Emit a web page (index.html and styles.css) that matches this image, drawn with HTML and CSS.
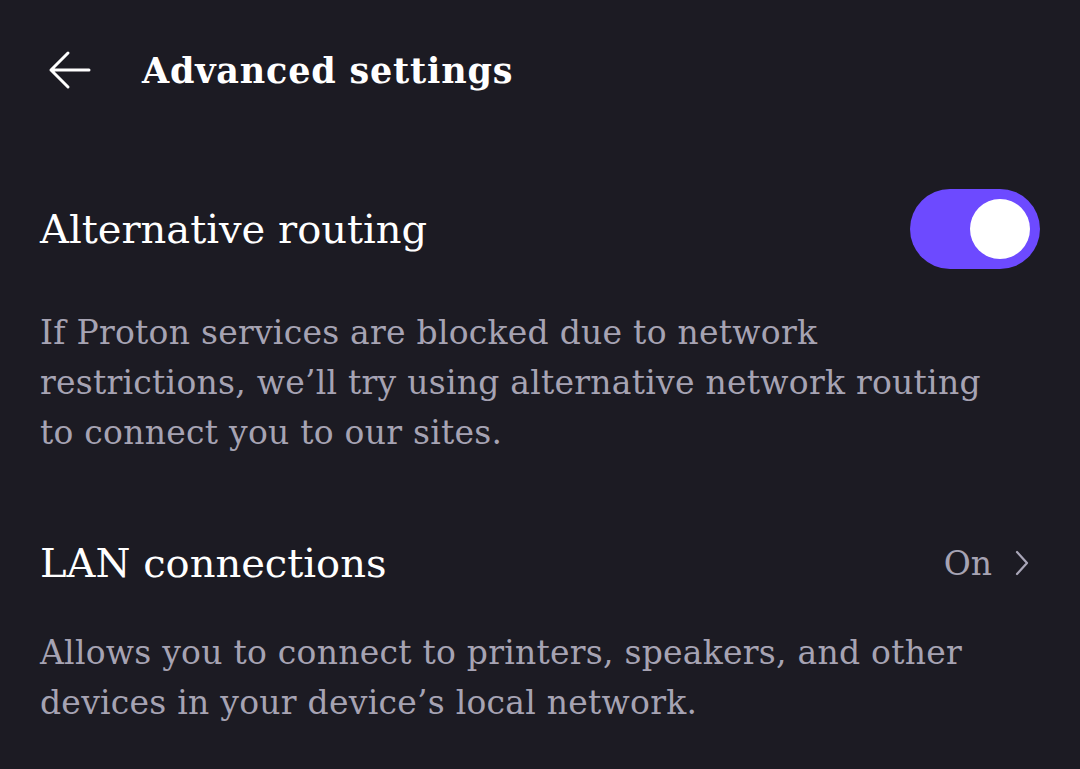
FILE: index.html
```html
<!DOCTYPE html>
<html lang="en">
<head>
    <meta charset="UTF-8">
    <meta name="viewport" content="width=device-width, initial-scale=1.0">
    <title>Advanced settings</title>
    <link rel="stylesheet" href="styles.css">
</head>
<body>
    <!-- 顶部标题栏 -->
    <div class="top-bar">
        <a class="back" href="javascript:;">
            <svg width="44" height="44" viewBox="0 0 44 44">
                <path d="M42 22H4M21 5L4 22l17 17" fill="none" stroke="#fff" stroke-width="3" stroke-linecap="round" stroke-linejoin="round"/>
            </svg>
        </a>
        <h1 class="page-title">Advanced settings</h1>
    </div>

    <!-- 设置项：替代路由 -->
    <div class="setting first">
        <div class="setting-row">
            <span class="setting-name">Alternative routing</span>
            <span class="switch on"><span class="knob"></span></span>
        </div>
        <p class="setting-desc">If Proton services are blocked due to network<br>restrictions, we’ll try using alternative network routing<br>to connect you to our sites.</p>
    </div>

    <!-- 设置项：局域网连接 -->
    <div class="setting second">
        <div class="setting-row">
            <span class="setting-name">LAN connections</span>
            <span class="setting-value">On
                <svg width="16" height="28" viewBox="0 0 16 28">
                    <path d="M3 3l10 11L3 25" fill="none" stroke="#a9a6b8" stroke-width="2.2" stroke-linecap="round" stroke-linejoin="round"/>
                </svg>
            </span>
        </div>
        <p class="setting-desc">Allows you to connect to printers, speakers, and other<br>devices in your device’s local network.</p>
    </div>
</body>
</html>
```

FILE: styles.css
```css
* {
    margin: 0;
    padding: 0;
}

body {
    background-color: #1c1b23;
    color: #fff;
    font-family: "DejaVu Serif", "Liberation Serif", serif;
}

/* 顶部标题栏 */
.top-bar {
    height: 140px;
    display: flex;
    align-items: center;
    padding-left: 47px;
}

.back {
    display: flex;
    width: 44px;
    height: 44px;
}

.page-title {
    margin-left: 51px;
    font-size: 35px;
    font-weight: bold;
    letter-spacing: 0.8px;
}

/* 设置项 */
.setting {
    padding: 0 40px;
}

.setting.first {
    margin-top: 49px;
}

.setting.second {
    margin-top: 65px;
}

.setting-row {
    height: 80px;
    display: flex;
    align-items: center;
    justify-content: space-between;
}

.setting-name {
    font-size: 40px;
}

.setting-desc {
    font-size: 33px;
    line-height: 50px;
    letter-spacing: 0.25px;
    color: #a6a3b3;
    white-space: nowrap;
}

.first .setting-desc {
    margin-top: 39px;
}

.second .setting-desc {
    margin-top: 25px;
}

/* 开关 */
.switch {
    width: 130px;
    height: 80px;
    border-radius: 40px;
    background-color: #6d4aff;
    display: flex;
    align-items: center;
    justify-content: flex-end;
    padding-right: 10px;
    box-sizing: border-box;
}

.knob {
    width: 60px;
    height: 60px;
    border-radius: 50%;
    background-color: #fff;
}

.setting-value {
    display: flex;
    align-items: center;
    gap: 22px;
    font-size: 33px;
    color: #a6a3b3;
    padding-right: 10px;
}
```
